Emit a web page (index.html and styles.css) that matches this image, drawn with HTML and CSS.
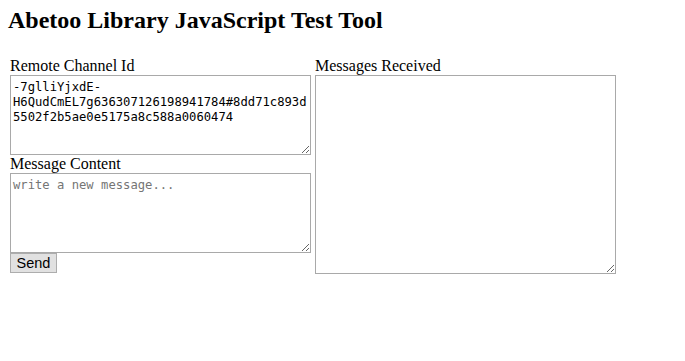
FILE: index.html
```html
<!DOCTYPE html>
<html lang="en">
  <head>
    <meta charset="UTF-8" />
    <meta name="viewport" content="width=device-width, initial-scale=1.0" />
    <title>Abetoo Library JavaScript Test Tool</title>
    <link rel="stylesheet" href="styles.css">
  </head>
  <body>
    <h2 class="title">Abetoo Library JavaScript Test Tool</h2>
    <section class="panels">
      <div class="column">
        <label for="channel-id">Remote Channel Id</label>
        <textarea id="channel-id" class="box short">-7glliYjxdE-H6QudCmEL7g636307126198941784#8dd71c893d5502f2b5ae0e5175a8c588a0060474</textarea>
        <label for="message">Message Content</label>
        <textarea id="message" class="box short" placeholder="write a new message..."></textarea>
        <div class="actions">
          <button type="button" class="send">Send</button>
        </div>
      </div>
      <div class="column">
        <label for="received">Messages Received</label>
        <textarea id="received" class="box tall"></textarea>
      </div>
    </section>
  </body>
</html>
```

FILE: styles.css
```css
/* Test tool page */
body {
  margin: 8px;
  font-family: "Liberation Serif", "Times New Roman", serif;
  color: #000;
  background: #fff;
}

.title {
  font-size: 24px;
  font-weight: bold;
  line-height: 28px;
  margin: -2px 0 23px;
}

.panels {
  display: flex;
  align-items: flex-start;
  gap: 4px;
  padding-left: 2px;
}

.column {
  display: flex;
  flex-direction: column;
  width: 301px;
}

.column label {
  display: block;
  font-size: 16px;
  line-height: 18px;
}

.box {
  display: block;
  box-sizing: border-box;
  width: 301px;
  margin: 0;
  padding: 4px 2px 2px;
  border: 1px solid #a9a9a9;
  font-family: "DejaVu Sans Mono", Consolas, monospace;
  font-size: 12.2px;
  line-height: 15px;
  color: #000;
  background: #fff;
  resize: both;
}

.box::placeholder {
  color: #757575;
}

.short {
  height: 80px;
}

.tall {
  height: 199px;
}

.actions {
  display: flex;
  padding-top: 0;
}

.send {
  box-sizing: border-box;
  width: 47px;
  height: 20px;
  padding: 0;
  margin: 0;
  font-family: "Liberation Sans", Arial, sans-serif;
  font-size: 14.5px;
  line-height: 18px;
  color: #000;
  background: #e1e1e1;
  border: 1px solid #adadad;
  border-radius: 0;
}
```
